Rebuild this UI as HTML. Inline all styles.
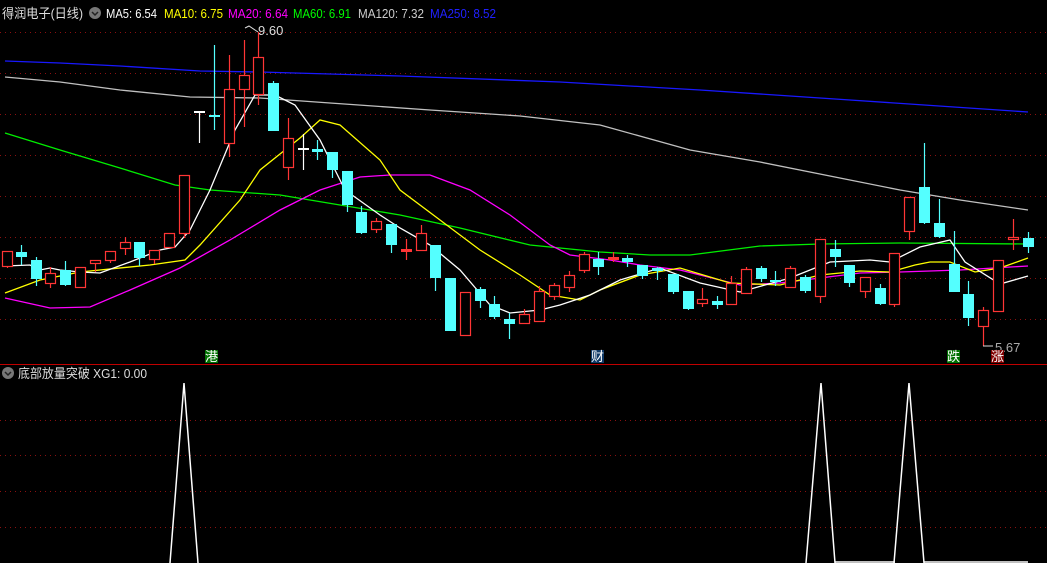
<!DOCTYPE html>
<html><head><meta charset="utf-8"><style>
html,body{margin:0;padding:0;background:#000;width:1047px;height:563px;overflow:hidden}
svg{display:block}
text{font-family:"Liberation Sans","Noto Sans CJK SC",sans-serif;font-size:13px}
</style></head><body>
<svg width="1047" height="563" xmlns="http://www.w3.org/2000/svg">
<g stroke="#8a1010" stroke-dasharray="1,4" stroke-width="1">
<line x1="0" y1="32.5" x2="1047" y2="32.5"/><line x1="0" y1="73.5" x2="1047" y2="73.5"/>
<line x1="0" y1="114.5" x2="1047" y2="114.5"/><line x1="0" y1="155.5" x2="1047" y2="155.5"/>
<line x1="0" y1="196.5" x2="1047" y2="196.5"/><line x1="0" y1="237.5" x2="1047" y2="237.5"/>
<line x1="0" y1="278.5" x2="1047" y2="278.5"/><line x1="0" y1="319.5" x2="1047" y2="319.5"/>
<line x1="0" y1="420.5" x2="1047" y2="420.5"/><line x1="0" y1="455.5" x2="1047" y2="455.5"/>
<line x1="0" y1="491.5" x2="1047" y2="491.5"/><line x1="0" y1="527.5" x2="1047" y2="527.5"/>
</g>
<line x1="0" y1="364.5" x2="1047" y2="364.5" stroke="#c00000"/>
<g fill="none" stroke-width="1.3">
<polyline stroke="#1818ff" points="5,61 60,63 120,66 200,71 260,72 400,76 560,82 700,90 850,100 1028,112"/>
<polyline stroke="#c0c0c0" points="5,77 60,82 120,90 190,97 260,98 330,103 430,110 520,116 600,125 690,150 760,162 900,190 960,200 1028,210"/>
<polyline stroke="#00ee00" points="5,133 60,150 120,168 175,185 210,190 280,195 340,205 400,215 460,228 530,245 600,252 650,255 690,255 760,246 820,244 900,243 1028,244"/>
<polyline stroke="#ff00ff" points="5,298 50,308 90,307 130,290 180,268 230,240 280,210 320,190 360,177 390,175 430,175 470,190 510,215 550,245 570,255 610,260 640,265 680,270 740,285 780,283 820,278 860,273 900,272 960,270 1028,266"/>
<polyline stroke="#ffff00" points="5,293 40,280 80,272 150,265 185,260 200,245 240,200 260,170 300,138 320,120 340,125 380,160 400,190 440,220 480,250 520,275 550,295 580,300 600,290 640,275 680,268 730,283 780,285 820,275 860,271 890,272 915,265 930,262 950,262 975,272 1000,268 1028,258"/>
<polyline stroke="#ffffff" points="5,266 30,265 40,270 50,268 60,270 80,272 100,273 130,262 160,250 175,247 190,230 210,190 235,130 255,95 275,95 295,105 320,140 345,190 380,215 400,228 430,245 460,270 490,305 510,313 540,310 560,305 590,295 620,280 660,268 700,283 740,292 790,278 830,262 870,260 890,262 920,247 950,240 965,262 1000,284 1028,276"/>
</g>
<g id="c"></g>
<text x="258" y="35" fill="#ddd" font-size="12">9.60</text>
<text x="995" y="352" fill="#aaa" font-size="12">5.67</text>
<polyline points="258,32 249,26 245,28" fill="none" stroke="#ddd"/>
<line x1="983" y1="346" x2="993" y2="346" stroke="#ddd"/>
<rect x="205" y="350" width="13" height="13" fill="#007000"/><text x="205" y="361" fill="#fff" font-size="12">港</text>
<rect x="591" y="350" width="13" height="13" fill="#103a68"/><text x="591" y="361" fill="#fff" font-size="12">财</text>
<rect x="947" y="350" width="13" height="13" fill="#007000"/><text x="947" y="361" fill="#fff" font-size="12">跌</text>
<rect x="991" y="350" width="13" height="13" fill="#800000"/><text x="991" y="361" fill="#fff" font-size="12">涨</text>
<text x="2" y="18" fill="#ddd" font-size="14" textLength="81" lengthAdjust="spacingAndGlyphs">得润电子(日线)</text>
<circle cx="95" cy="13" r="6" fill="#777"/><path d="M92 12l3 3 3-3" stroke="#222" stroke-width="1.5" fill="none"/>
<text x="106" y="18" fill="#fff" textLength="51" lengthAdjust="spacingAndGlyphs">MA5: 6.54</text>
<text x="164" y="18" fill="#ffff00" textLength="59" lengthAdjust="spacingAndGlyphs">MA10: 6.75</text>
<text x="228" y="18" fill="#ff00ff" textLength="60" lengthAdjust="spacingAndGlyphs">MA20: 6.64</text>
<text x="293" y="18" fill="#00ff00" textLength="58" lengthAdjust="spacingAndGlyphs">MA60: 6.91</text>
<text x="358" y="18" fill="#ccc" textLength="66" lengthAdjust="spacingAndGlyphs">MA120: 7.32</text>
<text x="430" y="18" fill="#2020ff" textLength="66" lengthAdjust="spacingAndGlyphs">MA250: 8.52</text>
<circle cx="8" cy="373" r="6" fill="#777"/><path d="M5 372l3 3 3-3" stroke="#222" stroke-width="1.5" fill="none"/>
<text x="18" y="378" fill="#ddd" textLength="129" lengthAdjust="spacingAndGlyphs">底部放量突破 XG1: 0.00</text>
<g fill="none" stroke="#fff" stroke-width="1.5">
<polyline points="170,563 184,383 198,563"/>
<polyline points="806,563 821,383 835,563"/>
<polyline points="894,563 909,383 924,563"/>
<line x1="835" y1="562" x2="895" y2="562"/><line x1="924" y1="562" x2="1028" y2="562"/>
</g>
</svg>
<script>
var d=[[7,'r',251,266,251,268],[21,'c',252,257,245,265],[36,'c',260,279,257,286],[50,'r',273,283,267,288],[65,'c',270,285,261,286],[80,'r',267,287,267,287],[95,'r',260,263,260,272],[110,'r',251,260,251,263],[125,'r',242,248,237,255],[139,'c',242,258,242,266],[154,'r',250,259,250,264],[169,'r',233,247,233,248],[184,'r',175,233,175,238],[199,'w',111,112,111,143],[214,'c',115,117,45,130],[229,'r',89,143,55,157],[244,'r',75,89,40,127],[258,'r',57,94,32,105],[273,'c',83,131,81,131],[288,'r',138,167,118,180],[303,'w',148,149,134,170],[317,'c',149,152,140,160],[332,'c',152,170,152,178],[347,'c',171,205,171,212],[361,'c',212,233,206,234],[376,'r',221,229,218,233],[391,'c',224,245,224,253],[406,'R',249,251,239,260],[421,'r',233,250,225,250],[435,'c',245,278,245,291],[450,'c',278,331,278,331],[465,'r',292,335,292,335],[480,'c',289,301,287,308],[494,'c',304,317,296,319],[509,'c',319,324,313,339],[524,'r',314,323,309,323],[539,'r',291,321,286,321],[554,'r',285,296,283,300],[569,'r',275,287,271,292],[584,'r',254,270,252,273],[598,'c',259,267,252,275],[613,'R',257,259,252,262],[627,'c',258,262,255,267],[642,'c',265,276,265,279],[657,'c',268,271,267,280],[673,'c',274,292,274,294],[688,'c',291,309,291,310],[702,'r',299,303,288,307],[717,'c',301,305,296,309],[731,'r',283,304,276,304],[746,'r',269,293,267,293],[761,'c',268,279,266,282],[775,'c',280,282,271,286],[790,'r',268,287,266,288],[805,'c',277,291,275,293],[820,'r',239,296,239,303],[835,'c',249,257,240,267],[849,'c',265,283,265,287],[865,'r',277,291,277,298],[880,'c',288,304,284,305],[894,'r',253,304,253,307],[909,'r',197,231,197,240],[924,'c',187,223,143,224],[939,'c',223,237,199,238],[954,'c',264,292,231,292],[968,'c',294,318,281,326],[983,'r',310,326,307,346],[998,'r',260,311,260,311],[1013,'r',237,239,219,250],[1028,'c',238,247,232,253]];
var s='',g=document.getElementById('c');
d.forEach(function(a){var x=a[0],t=a[1],col=t=='c'?'#54ffff':(t=='w'?'#fff':'#ff3535');
s+='<line x1="'+(x+.5)+'" y1="'+a[4]+'" x2="'+(x+.5)+'" y2="'+a[5]+'" stroke="'+col+'" stroke-width="1.2"/>';
var h=Math.max(a[3]-a[2],1);
if(t=='r')s+='<rect x="'+(x-4.5)+'" y="'+(a[2]+.5)+'" width="10" height="'+h+'" fill="#000" stroke="'+col+'" stroke-width="1.2"/>';
else s+='<rect x="'+(x-5)+'" y="'+a[2]+'" width="11" height="'+(h+(t=='c'?0:1))+'" fill="'+col+'"/>';});
g.innerHTML=s;
</script>
</body></html>
